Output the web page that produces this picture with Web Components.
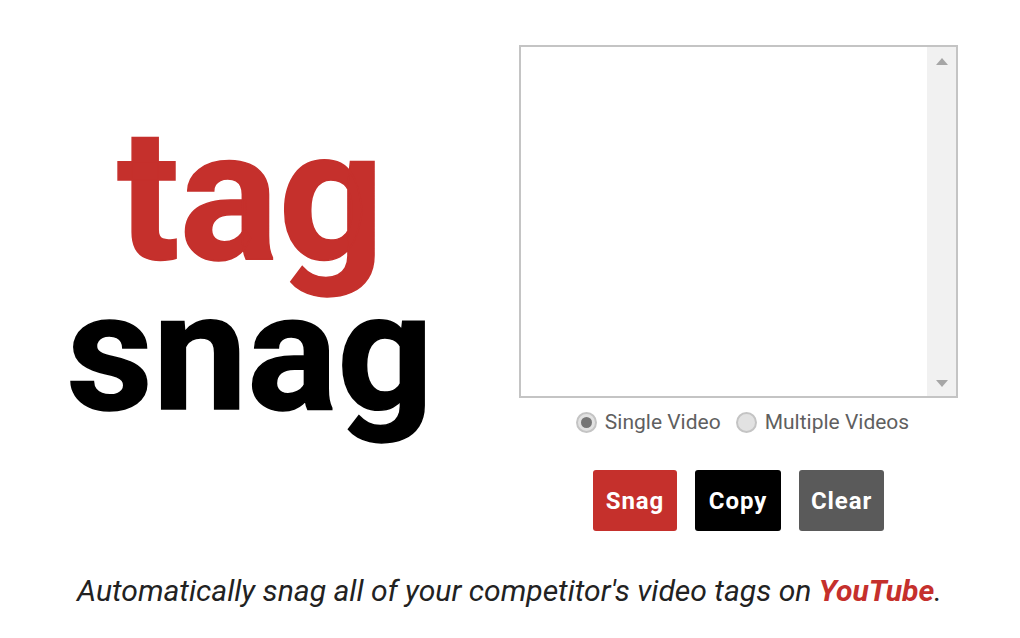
<!DOCTYPE html>
<html>
<head>
<meta charset="utf-8">
<title>Tag Snag</title>
<style>
    html, body { margin: 0; background: #fff; }
    body { font-family: Roboto, sans-serif; }
</style>
</head>
<body>
<snag-page>
    <snag-logo slot="logo"></snag-logo>
    <snag-form slot="form"></snag-form>
    <snag-caption slot="caption">Automatically snag all of your competitor's video tags on <b>YouTube</b>.</snag-caption>
</snag-page>

<script>
class SnagPage extends HTMLElement {
    connectedCallback() {
        if (this.shadowRoot) return;
        this.attachShadow({ mode: 'open' }).innerHTML = `
            <style>
                :host { display: block; width: 1020px; height: 638px; overflow: hidden; }
                .top { display: flex; padding: 45px 62px 0 60px; }
                .left { flex: 0 0 380px; }
                .right { flex: 0 0 439px; margin-left: 79px; }
            </style>
            <div class="top">
                <div class="left"><slot name="logo"></slot></div>
                <div class="right"><slot name="form"></slot></div>
            </div>
            <slot name="caption"></slot>
        `;
    }
}

class SnagLogo extends HTMLElement {
    connectedCallback() {
        if (this.shadowRoot) return;
        this.attachShadow({ mode: 'open' }).innerHTML = `
            <style>
                :host { display: block; padding-top: 76px; text-align: center; font-weight: 700; font-family: Roboto, sans-serif; -webkit-text-stroke: 1.5px currentColor; }
                div { line-height: 150px; }
                .tag { height: 157px; color: #c5302c; font-size: 184px; transform: scaleX(1.005); padding-left: 1px; }
                .snag { height: 150px; color: #000; font-size: 165px; transform: scaleX(1.02); }
            </style>
            <div class="tag">tag</div>
            <div class="snag">snag</div>
        `;
    }
}

class SnagTextbox extends HTMLElement {
    connectedCallback() {
        if (this.shadowRoot) return;
        this.attachShadow({ mode: 'open' }).innerHTML = `
            <style>
                :host { display: flex; justify-content: flex-end; box-sizing: border-box; height: 353px; border: 2px solid #c4c4c4; background: #fff; }
                .bar { width: 29px; background: #f1f1f1; display: flex; flex-direction: column; justify-content: space-between; align-items: center; padding: 11px 0 9px; }
                .up, .down { width: 0; height: 0; border-left: 6px solid transparent; border-right: 6px solid transparent; }
                .up { border-bottom: 7px solid #a6a6a6; }
                .down { border-top: 7px solid #a6a6a6; }
            </style>
            <div class="bar"><span class="up"></span><span class="down"></span></div>
        `;
    }
}

class SnagRadio extends HTMLElement {
    connectedCallback() {
        if (this.shadowRoot) return;
        this.attachShadow({ mode: 'open' }).innerHTML = `
            <style>
                :host { display: inline-flex; align-items: center; gap: 8px; font: 400 21px/26px Roboto, sans-serif; color: #5f5f5f; }
                .dot { box-sizing: border-box; width: 21px; height: 21px; border-radius: 50%; border: 2px solid #c4c4c4; background: #e2e2e2; display: flex; align-items: center; justify-content: center; }
                .dot i { width: 11px; height: 11px; border-radius: 50%; background: #767676; display: none; }
                :host([checked]) .dot i { display: block; }
            </style>
            <span class="dot"><i></i></span><slot></slot>
        `;
    }
}

class SnagButton extends HTMLElement {
    connectedCallback() {
        if (this.shadowRoot) return;
        this.attachShadow({ mode: 'open' }).innerHTML = `
            <style>
                :host { display: flex; align-items: center; justify-content: center; box-sizing: border-box; height: 61px; border-radius: 3px; font: 700 24px Roboto, sans-serif; letter-spacing: .9px; color: #fff; background: var(--bg, #555); }
            </style>
            <slot></slot>
        `;
    }
}

class SnagForm extends HTMLElement {
    connectedCallback() {
        if (this.shadowRoot) return;
        this.attachShadow({ mode: 'open' }).innerHTML = `
            <style>
                :host { display: block; }
                .radios { display: flex; justify-content: center; gap: 15px; margin-top: 11px; padding-left: 8px; }
                .buttons { display: flex; justify-content: center; gap: 18px; margin-top: 35px; }
                .snag { width: 84px; --bg: #c5302c; }
                .copy { width: 86px; --bg: #000; }
                .clear { width: 85px; --bg: #5a5a5a; }
            </style>
            <snag-textbox></snag-textbox>
            <div class="radios">
                <snag-radio checked>Single Video</snag-radio>
                <snag-radio>Multiple Videos</snag-radio>
            </div>
            <div class="buttons">
                <snag-button class="snag">Snag</snag-button>
                <snag-button class="copy">Copy</snag-button>
                <snag-button class="clear">Clear</snag-button>
            </div>
        `;
    }
}

class SnagCaption extends HTMLElement {
    connectedCallback() {
        if (this.shadowRoot) return;
        this.attachShadow({ mode: 'open' }).innerHTML = `
            <style>
                :host { display: block; margin-top: 43px; padding-right: 1px; text-align: center; font: italic 400 30.1px/34px Roboto, sans-serif; color: #222; }
                ::slotted(b) { color: #c5302c; font-weight: 700; }
            </style>
            <slot></slot>
        `;
    }
}

customElements.define('snag-page', SnagPage);
customElements.define('snag-logo', SnagLogo);
customElements.define('snag-textbox', SnagTextbox);
customElements.define('snag-radio', SnagRadio);
customElements.define('snag-button', SnagButton);
customElements.define('snag-form', SnagForm);
customElements.define('snag-caption', SnagCaption);
</script>
</body>
</html>
